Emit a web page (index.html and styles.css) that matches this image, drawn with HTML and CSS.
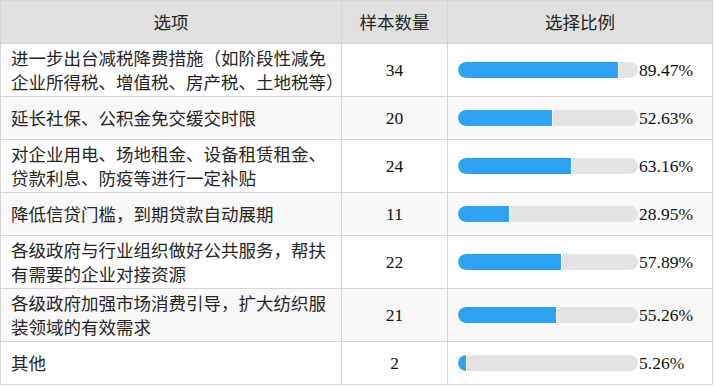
FILE: index.html
```
<!DOCTYPE html>
<html lang="zh-CN">
<head>
<meta charset="utf-8">
<title>选项统计</title>
<link rel="stylesheet" href="styles.css">
</head>
<body>
<table class="stats">
  <colgroup>
    <col class="c-opt">
    <col class="c-num">
    <col class="c-pct">
  </colgroup>
  <thead>
    <tr><th>选项</th><th>样本数量</th><th>选择比例</th></tr>
  </thead>
  <tbody>
    <tr>
      <td class="opt">进一步出台减税降费措施（如阶段性减免<span class="keep">企业所得税、增值税、房产税、土地税等）</span></td>
      <td class="num">34</td>
      <td class="pct"><div class="cell"><div class="track"><div class="fill" style="width:89.47%"></div></div><span class="val">89.47%</span></div></td>
    </tr>
    <tr>
      <td class="opt">延长社保、公积金免交缓交时限</td>
      <td class="num">20</td>
      <td class="pct"><div class="cell"><div class="track"><div class="fill" style="width:52.63%"></div></div><span class="val">52.63%</span></div></td>
    </tr>
    <tr>
      <td class="opt">对企业用电、场地租金、设备租赁租金、贷款利息、防疫等进行一定补贴</td>
      <td class="num">24</td>
      <td class="pct"><div class="cell"><div class="track"><div class="fill" style="width:63.16%"></div></div><span class="val">63.16%</span></div></td>
    </tr>
    <tr>
      <td class="opt">降低信贷门槛，到期贷款自动展期</td>
      <td class="num">11</td>
      <td class="pct"><div class="cell"><div class="track"><div class="fill" style="width:28.95%"></div></div><span class="val">28.95%</span></div></td>
    </tr>
    <tr>
      <td class="opt">各级政府与行业组织做好公共服务，帮扶有需要的企业对接资源</td>
      <td class="num">22</td>
      <td class="pct"><div class="cell"><div class="track"><div class="fill" style="width:57.89%"></div></div><span class="val">57.89%</span></div></td>
    </tr>
    <tr>
      <td class="opt">各级政府加强市场消费引导，扩大纺织服装领域的有效需求</td>
      <td class="num">21</td>
      <td class="pct"><div class="cell"><div class="track"><div class="fill" style="width:55.26%"></div></div><span class="val">55.26%</span></div></td>
    </tr>
    <tr>
      <td class="opt">其他</td>
      <td class="num">2</td>
      <td class="pct"><div class="cell"><div class="track"><div class="fill" style="width:5.26%"></div></div><span class="val">5.26%</span></div></td>
    </tr>
  </tbody>
</table>
</body>
</html>
```

FILE: styles.css
```
html, body {
  margin: 0;
  padding: 0;
  background: #ffffff;
}

body {
  font-family: "Liberation Serif", "Noto Sans CJK SC", serif;
  font-size: 17.5px;
  line-height: 24px;
  color: #222222;
}

.stats {
  border-collapse: collapse;
  table-layout: fixed;
  width: 712px;
}

.c-opt { width: 341px; }
.c-num { width: 106px; }
.c-pct { width: 265px; }

.stats th,
.stats td {
  border: 1px solid #d6d6d6;
  padding: 2px 10px;
  vertical-align: middle;
}

.stats thead tr { height: 43px; }
.stats tbody tr { height: 43px; }

.stats th {
  background: #e0e0e0;
  font-family: "Noto Sans CJK SC", sans-serif;
  font-weight: normal;
  text-align: center;
  color: #262626;
}

.stats tbody tr:nth-child(even) td {
  background: #f8f8f8;
}

.opt {
  font-family: "Noto Sans CJK SC", sans-serif;
  text-align: left;
  color: #262626;
  padding: 2px 3px 2px 11px;
}

.keep {
  white-space: nowrap;
}

.num {
  text-align: center;
  color: #111111;
}

.pct {
  padding-left: 10px;
  padding-right: 4px;
}

.cell {
  display: flex;
  align-items: center;
}

.track {
  flex: none;
  width: 180px;
  height: 16px;
  background: #e3e3e5;
  border-radius: 8px;
  overflow: hidden;
}

.fill {
  height: 100%;
  background: #2ea3f6;
  border-right: 1px solid #ffffff;
  box-sizing: border-box;
  border-radius: 8px 0 0 8px;
}

.val {
  color: #111111;
  margin-left: 1px;
}
```
